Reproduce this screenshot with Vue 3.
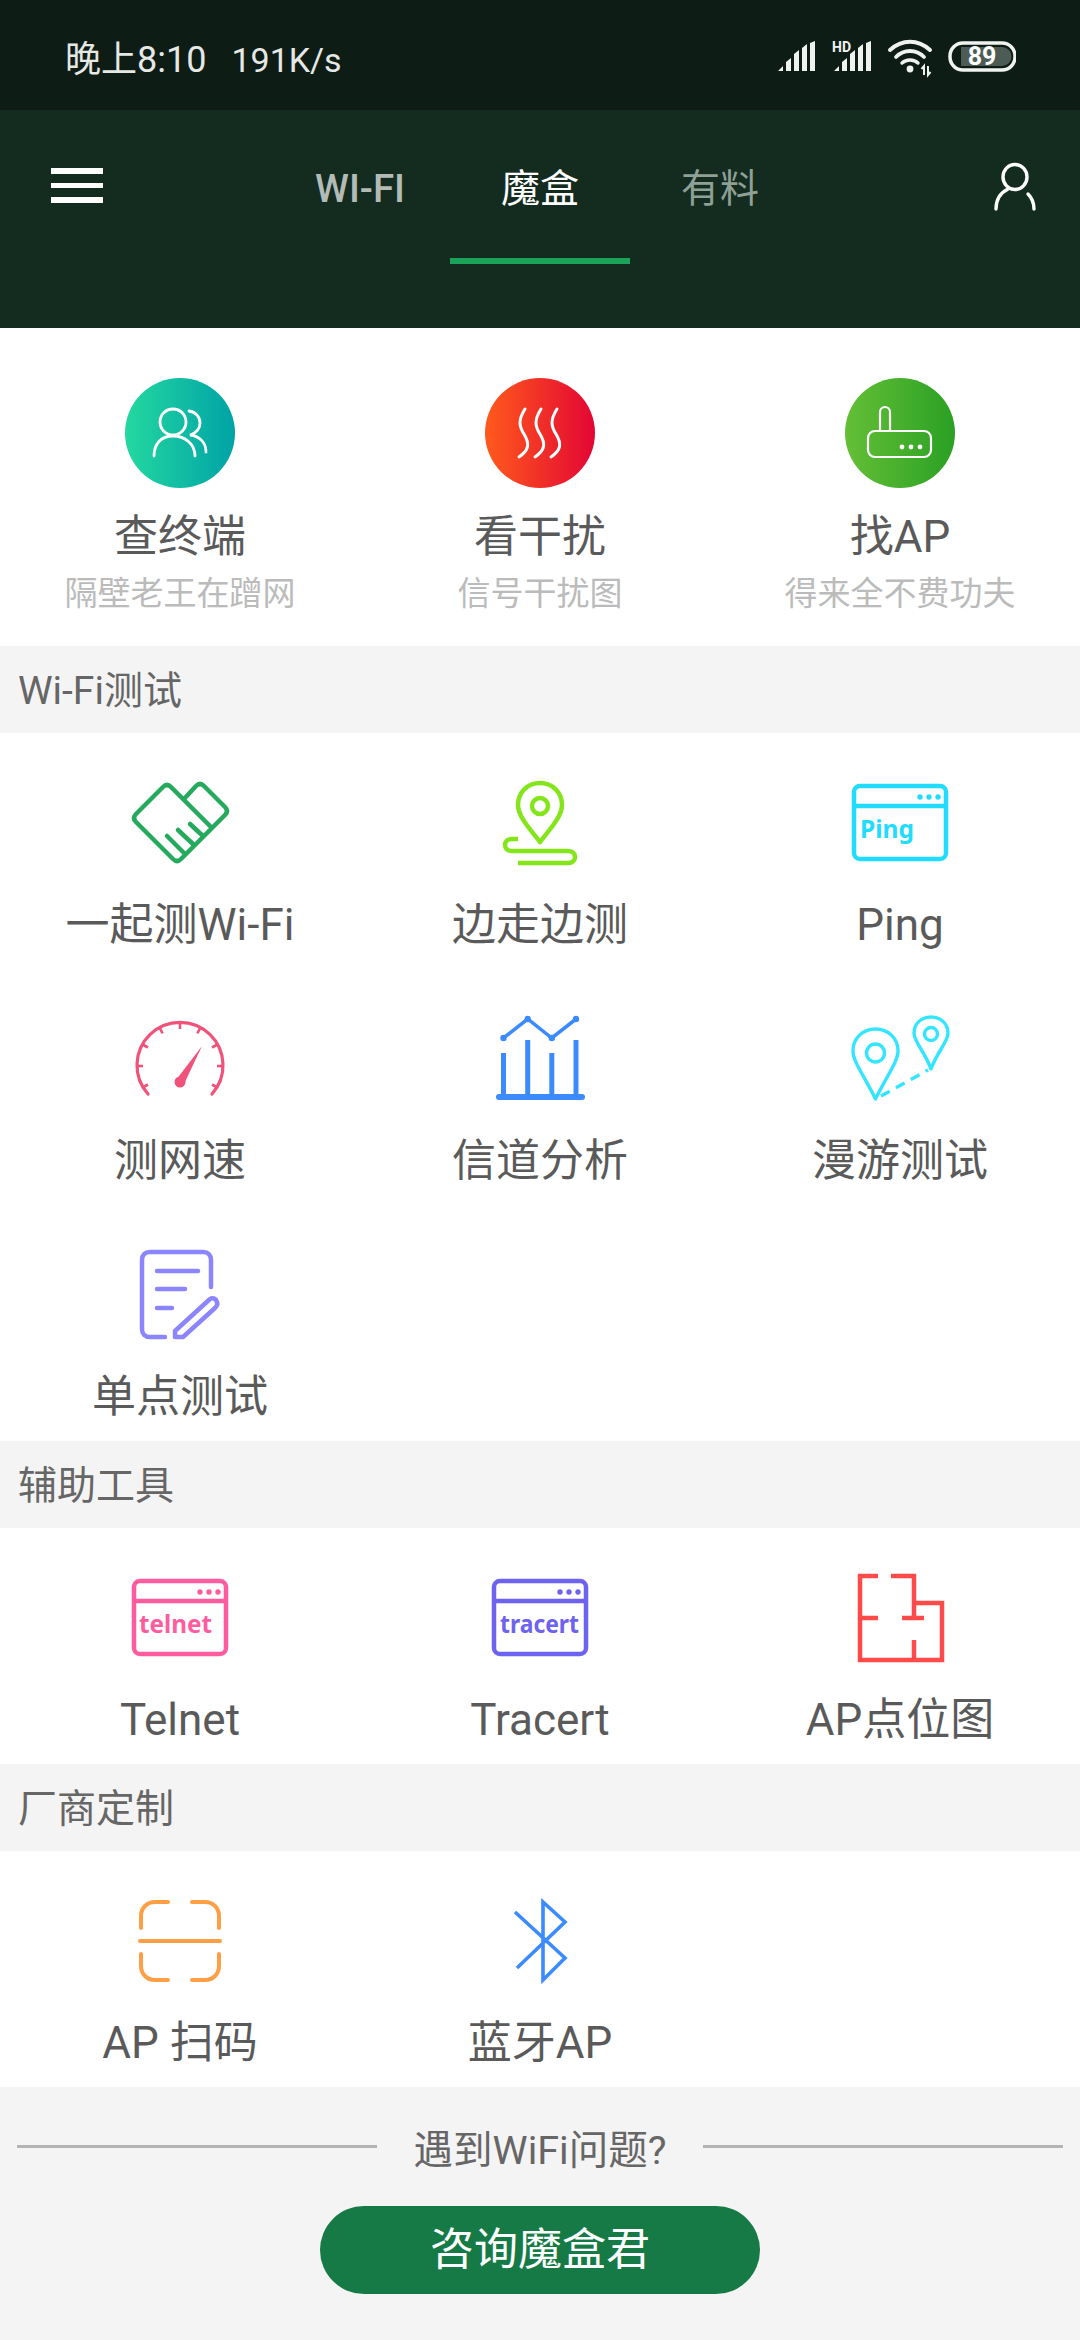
<script setup>
const ticks = [-120, -90, -60, -28, 0, 28, 60, 90, 120].map((deg) => {
  const a = (deg * Math.PI) / 180
  return {
    deg,
    x1: 55 + Math.sin(a) * 43,
    y1: 62 - Math.cos(a) * 43,
    x2: 55 + Math.sin(a) * 37,
    y2: 62 - Math.cos(a) * 37,
  }
})
</script>

<template>
  <div class="page">
    <div class="status-bar">
      <div class="status-text">
        <span class="time">晚上8:10</span>
        <span>191K/s</span>
      </div>
      <svg class="status-icons" width="240" height="40" viewBox="0 0 240 40">
        <g fill="#f0f2f0">
          <path d="M2 32l5-5v5zM10 32V23l5-4v13zM18 32V15l5-4v21zM26 32V9l5-4v27zM34 32V4l5-2v30z" />
          <path d="M58 32l5-5v5zM66 32V23l5-4v13zM74 32V15l5-4v21zM82 32V9l5-4v27zM90 32V4l5-2v30z" />
          <text x="56" y="13" class="hd">HD</text>
          <circle cx="134" cy="30" r="3.400" />
          <path d="M148 36v-9l-2.500 3M152 27v9l2.500-3" fill="none" stroke="#f0f2f0" stroke-width="2" />
        </g>
        <g fill="none" stroke="#f0f2f0" stroke-linecap="round">
          <path d="M114 11C126 0 142 0 154 11" stroke-width="4" />
          <path d="M120 18C128 10 140 10 148 18" stroke-width="3.800" />
          <path d="M126 24C130 20 138 20 142 24" stroke-width="3.400" />
          <rect x="174" y="4" width="65" height="27" rx="13" stroke-width="3.500" />
        </g>
        <path d="M185 8H226a9.500 9.500 0 0 1 0 19H185z" fill="#4c5c54" />
        <text x="206" y="26" text-anchor="middle" class="battery">89</text>
      </svg>
    </div>

    <div class="header">
      <div class="menu">
        <span></span>
        <span></span>
        <span></span>
      </div>
      <div class="tabs">
        <div class="tab wifi">WI-FI<i></i></div>
        <div class="tab active">魔盒<i></i></div>
        <div class="tab other">有料<i></i></div>
      </div>
      <svg class="user" width="44" height="50" viewBox="0 0 44 50" fill="none" stroke="#fff" stroke-width="3.400" stroke-linecap="round">
        <ellipse cx="22" cy="15" rx="12" ry="12.500" />
        <path d="M3 47C3 38 7 31 15 27" />
        <path d="M41 47C41 41 39 36 35 32" />
      </svg>
    </div>

    <div class="grid top">
      <div class="item">
        <svg class="icon" viewBox="0 0 110 110">
          <defs>
            <linearGradient id="g1"><stop offset="0" stop-color="#24d8a0" /><stop offset="1" stop-color="#00a3a6" /></linearGradient>
          </defs>
          <circle cx="55" cy="55" r="55" fill="url(#g1)" />
          <g fill="none" stroke="#fff" stroke-width="2.800" stroke-linecap="round">
            <ellipse cx="48" cy="44" rx="13" ry="13" />
            <path d="M29 78C29 66 36 58 48 58S70 66 70 78" />
            <path d="M64 33C71 34 75 39 75 45S71 55 65 57C74 58 81 64 81 74" />
          </g>
        </svg>
        <div class="label">查终端</div>
        <div class="sub">隔壁老王在蹭网</div>
      </div>
      <div class="item">
        <svg class="icon" viewBox="0 0 110 110">
          <defs>
            <linearGradient id="g2"><stop offset="0" stop-color="#ff5a1c" /><stop offset="1" stop-color="#e30634" /></linearGradient>
          </defs>
          <circle cx="55" cy="55" r="55" fill="url(#g2)" />
          <g fill="none" stroke="#fff" stroke-width="3" stroke-linecap="round">
            <path d="M40 31C33 42 34 48 39 56C45 66 44 72 34 79" />
            <path d="M56 31C49 42 50 48 55 56C61 66 60 72 50 79" />
            <path d="M72 31C65 42 66 48 71 56C77 66 76 72 66 79" />
          </g>
        </svg>
        <div class="label">看干扰</div>
        <div class="sub">信号干扰图</div>
      </div>
      <div class="item">
        <svg class="icon" viewBox="0 0 110 110">
          <defs>
            <linearGradient id="g3"><stop offset="0" stop-color="#64bf36" /><stop offset="1" stop-color="#2aa024" /></linearGradient>
          </defs>
          <circle cx="55" cy="55" r="55" fill="url(#g3)" />
          <g fill="none" stroke="#fff" stroke-width="2.200">
            <path d="M35 53V34a5 5 0 0 1 10 0V53" />
            <rect x="23" y="53" width="63" height="26" rx="7" />
          </g>
          <g fill="#fff">
            <circle cx="57" cy="69" r="2.400" />
            <circle cx="66" cy="69" r="2.400" />
            <circle cx="75" cy="69" r="2.400" />
          </g>
        </svg>
        <div class="label">找AP</div>
        <div class="sub">得来全不费功夫</div>
      </div>
    </div>

    <div class="section">Wi-Fi测试</div>
    <div class="grid">
      <div class="item">
        <svg class="icon" viewBox="0 0 110 110" fill="none" stroke="#25a95c" stroke-width="4.500" stroke-linecap="round">
          <path d="M59 31L71 18Q75 14 79 18L100 39Q104 43 100 47L56 91Q52 95 48 91L11 54Q7 50 11 46L38 19Q42 15 46 19L87 60" />
          <path d="M42 68L60 86M53 62L69 77M65 56L78 68" />
        </svg>
        <div class="label">一起测Wi-Fi</div>
      </div>
      <div class="item">
        <svg class="icon" viewBox="0 0 110 110" fill="none" stroke="#84e61a" stroke-width="4.500">
          <path d="M55 74C44 60 33 48 33 37C33 24 43 15 55 15S77 24 77 37C77 48 66 60 55 74Z" stroke-linejoin="round" />
          <circle cx="55" cy="38" r="8" />
          <path d="M33 71H27C22 71 20 74 20 77S22 83 27 83H83C88 83 90 86 90 89S88 95 83 95H33" />
        </svg>
        <div class="label">边走边测</div>
      </div>
      <div class="item">
        <svg class="icon" viewBox="0 0 110 110">
          <g fill="none" stroke="#22dcff" stroke-width="4.500">
            <rect x="9" y="18" width="92" height="73" rx="6" />
            <path d="M9 38H101" />
          </g>
          <g fill="#22dcff">
            <circle cx="75" cy="29" r="2.700" />
            <circle cx="84" cy="29" r="2.700" />
            <circle cx="93" cy="29" r="2.700" />
          </g>
          <text x="15" y="70" class="win-text" fill="#22dcff" textLength="54" lengthAdjust="spacingAndGlyphs">Ping</text>
        </svg>
        <div class="label">Ping</div>
      </div>
      <div class="item">
        <svg class="icon" viewBox="0 0 110 110" fill="none" stroke="#f0527a">
          <path d="M23 90A43 43 0 1 1 87 90" stroke-width="3.200" stroke-linecap="round" />
          <line v-for="t in ticks" :key="t.deg" :x1="t.x1" :y1="t.y1" :x2="t.x2" :y2="t.y2" stroke-width="2.600" />
          <path d="M77 42L59 80L51 76Z" fill="#f0527a" stroke="none" />
          <circle cx="55" cy="78" r="5.500" fill="#f0527a" stroke="none" />
        </svg>
        <div class="label">测网速</div>
      </div>
      <div class="item">
        <svg class="icon" viewBox="0 0 110 110" fill="none" stroke="#3b8bff">
          <path d="M18.500 93V49M42.700 93V36M66.800 93V49M91 93V36" stroke-width="5" />
          <path d="M14 93H97" stroke-width="6" stroke-linecap="round" />
          <path d="M18.500 34L42.700 15L66.800 34L91 15" stroke-width="3.500" />
          <g fill="#3b8bff" stroke="none">
            <circle cx="18.500" cy="34" r="3.200" />
            <circle cx="42.700" cy="15" r="3.200" />
            <circle cx="66.800" cy="34" r="3.200" />
            <circle cx="91" cy="15" r="3.200" />
          </g>
        </svg>
        <div class="label">信道分析</div>
      </div>
      <div class="item">
        <svg class="icon" viewBox="0 0 110 110" fill="none" stroke="#33e5ff" stroke-width="3.400">
          <path d="M30.500 95C20 73 8 58 8 47C8 34 18 25 30.500 25S53 34 53 47C53 58 41 73 30.500 95Z" stroke-linejoin="round" />
          <circle cx="30.500" cy="49" r="9" />
          <path d="M86 65C80 48 69 38 69 29C69 20 76 13 86 13S103 20 103 29C103 38 92 48 86 65Z" stroke-linejoin="round" />
          <circle cx="86" cy="30" r="6.500" />
          <path d="M36 92L83 66" stroke-dasharray="10 7" />
        </svg>
        <div class="label">漫游测试</div>
      </div>
      <div class="item">
        <svg class="icon" viewBox="0 0 110 110" fill="none" stroke="#8b86ff" stroke-width="4.500" stroke-linecap="round" stroke-linejoin="round">
          <path d="M40 97H25C20 97 17 94 17 89V20C17 15 20 12 25 12H78C83 12 86 15 86 20V47" />
          <path d="M32 31H73M32 49H60M32 68H47" />
          <path d="M50 97V91L85 59C88 57 91 59 92 62C93 64 92 66 90 68L58 97Z" />
        </svg>
        <div class="label">单点测试</div>
      </div>
    </div>

    <div class="section">辅助工具</div>
    <div class="grid">
      <div class="item">
        <svg class="icon" viewBox="0 0 110 110">
          <g fill="none" stroke="#ff5ca0" stroke-width="4.500">
            <rect x="9" y="18" width="92" height="73" rx="6" />
            <path d="M9 38H101" />
          </g>
          <g fill="#ff5ca0">
            <circle cx="75" cy="29" r="2.700" />
            <circle cx="84" cy="29" r="2.700" />
            <circle cx="93" cy="29" r="2.700" />
          </g>
          <text x="14" y="70" class="win-text" fill="#ff5ca0" textLength="73" lengthAdjust="spacingAndGlyphs">telnet</text>
        </svg>
        <div class="label">Telnet</div>
      </div>
      <div class="item">
        <svg class="icon" viewBox="0 0 110 110">
          <g fill="none" stroke="#6e62f0" stroke-width="4.500">
            <rect x="9" y="18" width="92" height="73" rx="6" />
            <path d="M9 38H101" />
          </g>
          <g fill="#6e62f0">
            <circle cx="75" cy="29" r="2.700" />
            <circle cx="84" cy="29" r="2.700" />
            <circle cx="93" cy="29" r="2.700" />
          </g>
          <text x="15" y="70" class="win-text" fill="#6e62f0" textLength="79" lengthAdjust="spacingAndGlyphs">tracert</text>
        </svg>
        <div class="label">Tracert</div>
      </div>
      <div class="item">
        <svg class="icon" viewBox="0 0 110 110" fill="none" stroke="#ff4a4a" stroke-width="4.500">
          <path d="M33 13H15V97H97V40H69" />
          <path d="M46 13H69V55" />
          <path d="M15 55H33M57 55H79M69 77V97" />
        </svg>
        <div class="label">AP点位图</div>
      </div>
    </div>

    <div class="section">厂商定制</div>
    <div class="grid">
      <div class="item">
        <svg class="icon" viewBox="0 0 110 110" fill="none" stroke="#ff9f45" stroke-width="4" stroke-linecap="round">
          <path d="M43 16H30C22 16 16 22 16 30V42" />
          <path d="M67 16H80C88 16 94 22 94 30V42" />
          <path d="M43 94H30C22 94 16 88 16 80V68" />
          <path d="M67 94H80C88 94 94 88 94 80V68" />
          <path d="M15 55H95" />
        </svg>
        <div class="label">AP 扫码</div>
      </div>
      <div class="item">
        <svg class="icon" viewBox="0 0 110 110" fill="none" stroke="#3b8bff" stroke-width="3.600">
          <path d="M30 26L80 72L58 94V16L80 36L32 82" />
        </svg>
        <div class="label">蓝牙AP</div>
      </div>
    </div>

    <div class="footer">
      <div class="ask">
        <span class="rule"></span>
        <span>遇到WiFi问题?</span>
        <span class="rule"></span>
      </div>
      <div class="btn">咨询魔盒君</div>
    </div>
  </div>
</template>

<style scoped>
.page {
  width: 1080px;
  height: 2340px;
  overflow: hidden;
  background: #f4f4f4;
  font-family: Roboto, "Noto Sans CJK SC", sans-serif;
}
.status-bar {
  height: 110px;
  background: #0d1c14;
  display: flex;
  align-items: center;
  justify-content: space-between;
  padding: 0 64px 0 65px;
  box-sizing: border-box;
  color: #e6e8e6;
}
.status-text {
  font-size: 34px;
  line-height: 44px;
  display: flex;
  align-items: center;
  gap: 25px;
  padding-top: 10px;
}
.time {
  font-size: 36px;
}
.status-icons {
  margin-top: 8px;
}
.hd {
  font: bold 14px Roboto, sans-serif;
}
.battery {
  font: bold 25px Roboto, sans-serif;
  fill: #fff;
}
.header {
  height: 218px;
  background: #142b20;
  display: grid;
  grid-template-columns: 270px 540px 270px;
  align-items: start;
}
.menu {
  margin: 58px 0 0 51px;
  width: 52px;
  display: flex;
  flex-direction: column;
  gap: 9px;
}
.menu span {
  height: 5.500px;
  background: #fff;
}
.tabs {
  display: flex;
}
.tab {
  width: 180px;
  height: 154px;
  padding-top: 49px;
  box-sizing: border-box;
  line-height: 60px;
  font-size: 39px;
  text-align: center;
  color: #fff;
}
.tab i {
  display: block;
  height: 6px;
  margin-top: 39px;
}
.tab.active i {
  background: #1ba35a;
}
.wifi {
  font-size: 38.500px;
  font-weight: 500;
  color: #b2bbb6;
}
.other {
  color: #8fa096;
}
.user {
  margin: 52px 0 0 183px;
}
.grid {
  display: grid;
  grid-template-columns: repeat(3, 360px);
  background: #fff;
}
.item {
  height: 236px;
  padding-top: 35px;
  box-sizing: border-box;
  display: flex;
  flex-direction: column;
  align-items: center;
}
.icon {
  width: 110px;
  height: 110px;
  flex: none;
}
.label {
  margin-top: 17px;
  line-height: 60px;
  font-size: 44px;
  color: #5a5a5a;
  white-space: nowrap;
}
.top .item {
  height: 318px;
  padding-top: 50px;
}
.top .label {
  margin-top: 19px;
}
.sub {
  margin-top: 5px;
  line-height: 44px;
  font-size: 33px;
  color: #bbb;
}
.section {
  height: 87px;
  padding-left: 18px;
  line-height: 90px;
  font-size: 39px;
  color: #666;
  background: #f4f4f4;
}
.win-text {
  font: bold 25px "Noto Sans", sans-serif;
}
.footer {
  padding-top: 29px;
}
.ask {
  display: flex;
  align-items: center;
  justify-content: space-between;
  padding: 0 17px;
  height: 60px;
  font-size: 39.500px;
  color: #666;
}
.rule {
  width: 360px;
  height: 3px;
  background: #b4b4b4;
}
.btn {
  width: 440px;
  height: 88px;
  margin: 30px auto 0;
  border-radius: 44px;
  background: #157a45;
  color: #fff;
  font-size: 44px;
  line-height: 88px;
  text-align: center;
}
</style>

<style>
html, body {
  margin: 0;
  background: #f4f4f4;
}
</style>
